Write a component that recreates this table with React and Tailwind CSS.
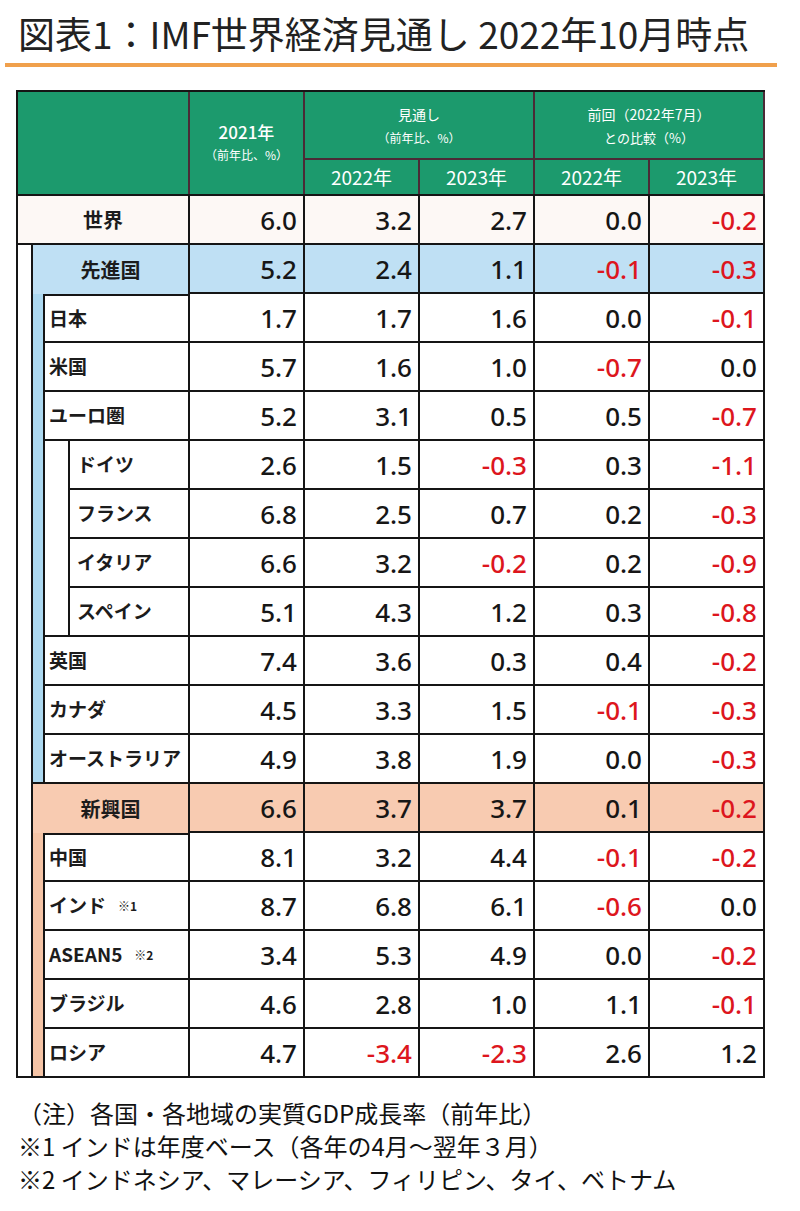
import React from "react";

const B = "border-[#151515]";

function Val({ v, bg }) {
  const neg = v.startsWith("-");
  return (
    <div
      className={`w-[115px] flex-none h-full flex items-center justify-end pr-[6px] border-r-2 border-b-2 border-[#151515] font-['Noto_Sans',sans-serif] font-medium text-[26px] leading-none ${
        neg ? "text-[#dd161d]" : "text-[#161616]"
      } ${bg || ""}`}
    >
      {v}
    </div>
  );
}

function Label({ label, note, w, top }) {
  return (
    <div
      className={`${w} flex-none h-full flex items-center border-r-2 border-b-2 border-[#151515] text-[19px] font-bold text-[#1c1c1c] ${
        top ? "border-t-2" : ""
      } ${w === "w-[120px]" ? "pl-[7px]" : "pl-[4px]"}`}
    >
      <span>{label}</span>
      {note && <span className="ml-[12px] text-[12px] font-bold">{note}</span>}
    </div>
  );
}

function Row({ r, w, top }) {
  return (
    <div className="flex h-[49px]">
      <Label label={r[0]} note={r[6]} w={w} top={top} />
      {r.slice(1, 6).map((v, i) => (
        <Val key={i} v={v} />
      ))}
    </div>
  );
}

function Group({ head, rows, nested, after, rowBg, stripBg }) {
  return (
    <div className="flex flex-col border-l-2 border-[#151515]">
      <div className="flex h-[49px]">
        <div
          className={`w-[157px] flex-none h-full flex items-center justify-center border-r-2 border-[#151515] text-[20px] font-bold text-[#1c1c1c] ${rowBg}`}
        >
          {head[0]}
        </div>
        {head.slice(1).map((v, i) => (
          <Val key={i} v={v} bg={rowBg} />
        ))}
      </div>
      <div className="flex">
        <div className={`w-[10px] flex-none border-b-2 border-[#151515] ${stripBg}`} />
        <div className="w-[722px] flex flex-col border-l-2 border-[#151515]">
          {rows.map((r, i) => (
            <Row key={i} r={r} w="w-[145px]" top={i === 0} />
          ))}
          {nested && (
            <div className="flex">
              <div className="w-[23px] flex-none border-b-2 border-[#151515]" />
              <div className="w-[697px] flex flex-col border-l-2 border-[#151515]">
                {nested.map((r, i) => (
                  <Row key={i} r={r} w="w-[120px]" />
                ))}
              </div>
            </div>
          )}
          {after &&
            after.map((r, i) => <Row key={i} r={r} w="w-[145px]" />)}
        </div>
      </div>
    </div>
  );
}

export default function App() {
  return (
    <div className="w-[800px] h-[1211px] bg-white font-['Noto_Sans_CJK_JP',sans-serif] text-[#1a1a1a] overflow-hidden">
      <div className="pl-[18px] pt-[10px] text-[37px] leading-[46px] text-[#222]">
        図表1：IMF世界経済見通し 2022年10月時点
      </div>
      <div className="ml-[5px] mt-[7px] h-[4px] w-[772px] bg-[#f0a04c]" />

      <div className={`ml-[16px] mt-[23px] w-[749px] border-l-2 border-t-2 ${B}`}>
        {/* header */}
        <div className={`flex h-[104px] border-b-2 ${B} bg-[#1c9a6d] text-white`}>
          <div className="w-[172px] flex-none border-r-2 border-[#4b2a36]" />
          <div className="w-[115px] flex-none border-r-2 border-[#4b2a36] flex flex-col items-center justify-center">
            <div className="text-[17px] leading-[24px] font-medium">2021年</div>
            <div className="text-[12px] leading-[22px]">（前年比、%）</div>
          </div>
          <div className="w-[230px] flex-none border-r-2 border-[#4b2a36] flex flex-col">
            <div className="h-[68px] border-b-2 border-[#4b2a36] flex flex-col items-center justify-center">
              <div className="text-[14px] leading-[26px]">見通し</div>
              <div className="text-[12px] leading-[22px]">（前年比、%）</div>
            </div>
            <div className="flex flex-1">
              <div className="w-[115px] flex-none border-r-2 border-[#4b2a36] flex items-center justify-center text-[19px]">
                2022年
              </div>
              <div className="flex-1 flex items-center justify-center text-[19px]">2023年</div>
            </div>
          </div>
          <div className="w-[230px] flex-none border-r-2 border-[#4b2a36] flex flex-col">
            <div className="h-[68px] border-b-2 border-[#4b2a36] flex flex-col items-center justify-center">
              <div className="text-[14px] leading-[26px]">前回（2022年7月）</div>
              <div className="text-[13px] leading-[22px]">との比較（%）</div>
            </div>
            <div className="flex flex-1">
              <div className="w-[115px] flex-none border-r-2 border-[#4b2a36] flex items-center justify-center text-[19px]">
                2022年
              </div>
              <div className="flex-1 flex items-center justify-center text-[19px]">2023年</div>
            </div>
          </div>
        </div>

        {/* world */}
        <div className="flex h-[49px] bg-[#fdf8f5]">
          <div className={`w-[172px] flex-none h-full flex items-center justify-center border-r-2 border-b-2 ${B} text-[20px] font-bold text-[#1c1c1c]`}>
            世界
          </div>
          {["6.0", "3.2", "2.7", "0.0", "-0.2"].map((v, i) => (
            <Val key={i} v={v} />
          ))}
        </div>

        {/* groups */}
        <div className="flex">
          <div className={`w-[13px] flex-none border-b-2 ${B}`} />
          <div className="w-[734px] flex flex-col">
            <Group
              head={["先進国", "5.2", "2.4", "1.1", "-0.1", "-0.3"]}
              rowBg="bg-[#bfe0f4]"
              stripBg="bg-[#acd8f0]"
              rows={[
                ["日本", "1.7", "1.7", "1.6", "0.0", "-0.1"],
                ["米国", "5.7", "1.6", "1.0", "-0.7", "0.0"],
                ["ユーロ圏", "5.2", "3.1", "0.5", "0.5", "-0.7"],
              ]}
              nested={[
                ["ドイツ", "2.6", "1.5", "-0.3", "0.3", "-1.1"],
                ["フランス", "6.8", "2.5", "0.7", "0.2", "-0.3"],
                ["イタリア", "6.6", "3.2", "-0.2", "0.2", "-0.9"],
                ["スペイン", "5.1", "4.3", "1.2", "0.3", "-0.8"],
              ]}
              after={[
                ["英国", "7.4", "3.6", "0.3", "0.4", "-0.2"],
                ["カナダ", "4.5", "3.3", "1.5", "-0.1", "-0.3"],
                ["オーストラリア", "4.9", "3.8", "1.9", "0.0", "-0.3"],
              ]}
            />
            <Group
              head={["新興国", "6.6", "3.7", "3.7", "0.1", "-0.2"]}
              rowBg="bg-[#f8cbb1]"
              stripBg="bg-[#f5c4a6]"
              rows={[
                ["中国", "8.1", "3.2", "4.4", "-0.1", "-0.2"],
                ["インド", "8.7", "6.8", "6.1", "-0.6", "0.0", "※1"],
                ["ASEAN5", "3.4", "5.3", "4.9", "0.0", "-0.2", "※2"],
                ["ブラジル", "4.6", "2.8", "1.0", "1.1", "-0.1"],
                ["ロシア", "4.7", "-3.4", "-2.3", "2.6", "1.2"],
              ]}
            />
          </div>
        </div>
      </div>

      <div className="mt-[18px] pl-[18px] text-[24px] leading-[33px] text-[#111]">
        <div>（注）各国・各地域の実質GDP成長率（前年比）</div>
        <div>※1 インドは年度ベース（各年の4月～翌年３月）</div>
        <div>※2 インドネシア、マレーシア、フィリピン、タイ、ベトナム</div>
      </div>
    </div>
  );
}
